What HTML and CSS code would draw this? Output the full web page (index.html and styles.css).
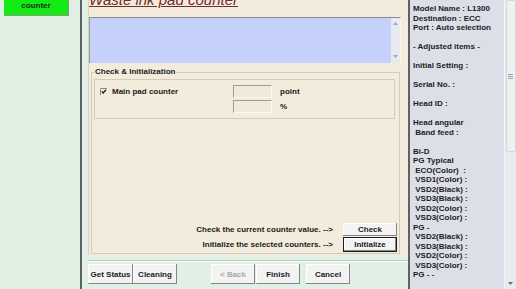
FILE: index.html
```html
<!DOCTYPE html>
<html lang="en">
<head>
  <meta charset="UTF-8">
  <title>Waste ink pad counter</title>
  <link rel="stylesheet" href="styles.css">
</head>
<body>
  <div class="wizard">
    <aside class="steps">
      <div class="step">Waste ink pad<br>counter</div>
    </aside>

    <main class="content">
      <section class="page">
        <h1 class="title">Waste ink pad counter</h1>

        <div class="memo">
          <div class="memo-text"></div>
          <div class="memo-scroll">
            <svg width="5" height="3" viewBox="0 0 5 3"><path d="M0 3 L2.5 0 L5 3Z" fill="#a4a8b0"/></svg>
            <svg width="5" height="3" viewBox="0 0 5 3"><path d="M0 0 L2.5 3 L5 0Z" fill="#a4a8b0"/></svg>
          </div>
        </div>

        <fieldset class="group">
          <legend>Check &amp; Initialization</legend>
          <div class="counter-box">
            <label class="check">
              <svg class="tick" width="7" height="7" viewBox="0 0 7 7">
                <path d="M0.5 7 V0.5 H7" fill="none" stroke="#8a8a8a" stroke-width="1"/>
                <path d="M1.8 3.4 L3.2 5 L6 1.8" fill="none" stroke="#1a1a1a" stroke-width="1.3"/>
              </svg>
              Main pad counter
            </label>
            <div class="field"></div>
            <span>point</span>
            <span></span>
            <div class="field"></div>
            <span>%</span>
          </div>

          <div class="actions">
            <div class="action">
              <span>Check the current counter value. --&gt;</span>
              <button class="btn">Check</button>
            </div>
            <div class="action">
              <span>Initialize the selected counters. --&gt;</span>
              <button class="btn default">Initialize</button>
            </div>
          </div>
        </fieldset>
      </section>

      <div class="separator"></div>

      <footer class="nav">
        <button class="btn nav-btn wide">Get Status</button>
        <button class="btn nav-btn">Cleaning</button>
        <button class="btn nav-btn disabled back">&lt; Back</button>
        <button class="btn nav-btn finish">Finish</button>
        <button class="btn nav-btn cancel">Cancel</button>
      </footer>
    </main>

    <aside class="info">
      <div class="info-text">Model Name : L1300
Destination : ECC
Port : Auto selection

- Adjusted items -

Initial Setting :

Serial No. :

Head ID :

Head angular
 Band feed :

Bi-D
PG Typical
 ECO(Color)  :
 VSD1(Color) :
 VSD2(Black) :
 VSD3(Black) :
 VSD2(Color) :
 VSD3(Color) :
PG -
 VSD2(Black) :
 VSD3(Black) :
 VSD2(Color) :
 VSD3(Color) :
PG - -</div>
      <div class="scrollbar">
        <div class="thumb">
          <span></span><span></span><span></span>
        </div>
        <svg class="down" width="5" height="3" viewBox="0 0 5 3"><path d="M0 0 L2.5 3 L5 0Z" fill="#6c7078"/></svg>
      </div>
    </aside>
  </div>
</body>
</html>
```

FILE: styles.css
```css
* {
  box-sizing: border-box;
}
body {
  margin: 0;
  font-family: 'Liberation Sans', Arial, sans-serif;
  font-size: 8px;
  font-weight: bold;
  color: #1b1b1b;
  width: 516px;
  height: 289px;
  overflow: hidden;
}
.wizard {
  display: flex;
  height: 289px;
}

/* left step list */
.steps {
  width: 82px;
  padding-left: 4px;
  background: #dff0e3;
  border-right: 2px solid #5a6064;
}
.step {
  width: 65px;
  height: 27px;
  margin-top: -11px;
  padding-top: 2px;
  background: #14ea14;
  border-right: 1px solid #8a968a;
  border-bottom: 1px solid #8a968a;
  text-align: center;
  line-height: 10px;
  color: #1c2a1c;
}

/* middle */
.content {
  width: 326px;
  padding-left: 6px;
  background: #e0f0e4;
  display: flex;
  flex-direction: column;
}
.page {
  width: 320px;
  height: 255px;
  background: #f3ecdc;
  border-left: 1px solid #d8d2c2;
}
.title {
  margin: -7px 0 0 0;
  height: 24px;
  font-size: 15px;
  line-height: 14.5px;
  font-style: italic;
  font-weight: normal;
  color: #722b2b;
  text-decoration: underline;
  white-space: nowrap;
}
.memo {
  width: 312px;
  height: 46px;
  display: flex;
  border-top: 1px solid #8c8c8c;
  border-left: 1px solid #9a9a9a;
  border-right: 1px solid #f6f6f6;
}
.memo-text {
  flex: 1;
  background: #c6d1fb;
}
.memo-scroll {
  width: 9px;
  background: #e8eaf0;
  display: flex;
  flex-direction: column;
  justify-content: space-between;
  align-items: center;
  padding: 4px 0 5px;
}
.memo-scroll svg {
  display: block;
}

.group {
  width: 309px;
  height: 187px;
  margin: 4px 0 0 2px;
  padding: 0 2px 1px 2px;
  border: 1px solid #d2ccbc;
  display: flex;
  flex-direction: column;
}
.group legend {
  padding: 0 1px;
  line-height: 10px;
}
.counter-box {
  width: 301px;
  height: 40px;
  margin-top: 2px;
  padding: 5px 0 0 5px;
  border: 1px solid #d2ccbc;
  display: grid;
  grid-template-columns: 125px 39px auto;
  grid-auto-rows: 13px;
  column-gap: 8px;
  row-gap: 2px;
  align-items: center;
}
.check {
  display: flex;
  align-items: center;
  gap: 5px;
}
.tick {
  display: block;
}
.field {
  height: 13px;
  background: #f1eadb;
  border-top: 1px solid #9c9c9c;
  border-left: 1px solid #9c9c9c;
  border-right: 1px solid #fbf8f0;
  border-bottom: 1px solid #fbf8f0;
}
.actions {
  margin-top: auto;
  display: flex;
  flex-direction: column;
  gap: 1px;
}
.action {
  display: flex;
  justify-content: flex-end;
  align-items: center;
  gap: 10px;
}
.action .btn {
  width: 54px;
  height: 13px;
}
.action .btn.default {
  height: 15px;
  border: 1px solid #1e1e1e;
}

.btn {
  font-family: inherit;
  font-size: 8px;
  font-weight: bold;
  color: #1b1b1b;
  padding: 0;
  border: none;
  background: #f3f3f3;
  box-shadow: inset -1px -1px #858585, inset 1px 1px #ffffff;
}

.separator {
  margin-top: 5px;
  width: 320px;
  height: 2px;
  border-top: 1px solid #b9c6bc;
  border-bottom: 1px solid #fbfffb;
}
.nav {
  display: flex;
  margin-top: 2px;
}
.nav-btn {
  width: 44px;
  height: 20px;
}
.nav-btn.wide {
  width: 45px;
}
.nav-btn.back {
  margin-left: 34px;
}
.nav-btn.finish {
  margin-left: 1px;
}
.nav-btn.cancel {
  margin-left: 6px;
}
.nav-btn.disabled {
  color: #a9a9a9;
}

/* right info list */
.info {
  width: 108px;
  display: flex;
  border-left: 2px solid #5e6266;
}
.info-text {
  flex: 1;
  background: #dcdfe7;
  padding: 4px 0 0 3px;
  line-height: 9.5px;
  white-space: pre;
  color: #1a1c26;
}
.scrollbar {
  width: 12px;
  background: #e8eaed;
  border-left: 1px solid #f4f5f7;
  display: flex;
  flex-direction: column;
  align-items: center;
}
.thumb {
  width: 10px;
  height: 152px;
  background: #eef0f2;
  border: 1px solid #d4d7dc;
  border-radius: 2px;
  display: flex;
  flex-direction: column;
  justify-content: center;
  align-items: center;
  gap: 1px;
}
.thumb span {
  width: 5px;
  height: 1px;
  background: #9ca0a8;
}
.down {
  display: block;
  margin-top: auto;
  margin-bottom: 4px;
}
```
